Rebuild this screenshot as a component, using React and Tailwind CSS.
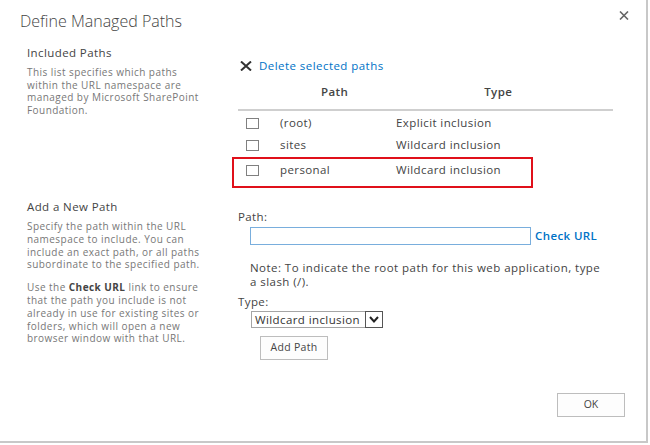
const rows = [
  { path: "(root)", type: "Explicit inclusion" },
  { path: "sites", type: "Wildcard inclusion" },
];

function CheckBox() {
  return <span className="block w-[13px] h-[11px] border border-[#808080] bg-white" />;
}

function PathRow({ path, type }) {
  return (
    <div className="flex items-center h-[22px] text-[11.5px] tracking-[0.4px] text-[#444]">
      <div className="w-[42px] pl-[8px]">
        <CheckBox />
      </div>
      <div className="w-[116px]">{path}</div>
      <div>{type}</div>
    </div>
  );
}

export default function App() {
  return (
    <div className="w-[650px] h-[445px] bg-white font-['Open_Sans',sans-serif]">
      <div className="w-[648px] h-[443px] border-r-2 border-b-2 border-[#c8c8c8] flex flex-col">
        {/* title bar */}
        <div className="flex justify-between items-start pl-[20px] pr-[17px] pt-[9px]">
          <h1 className="text-[16px] leading-[24px] font-light text-[#444]">Define Managed Paths</h1>
          <button className="mt-[2px] w-[10px] h-[9px] text-[#666]">
            <svg viewBox="0 0 10 9" className="w-[10px] h-[9px]">
              <path d="M1 0.5 L9 8.5 M9 0.5 L1 8.5" stroke="currentColor" strokeWidth="1.6" />
            </svg>
          </button>
        </div>

        {/* included paths */}
        <div className="flex mt-[12px]">
          <div className="w-[238px] pl-[27px]">
            <div className="text-[11.5px] tracking-[0.4px] leading-[16px] text-[#444]">Included Paths</div>
            <p className="mt-[5px] text-[10px] tracking-[0.45px] leading-[12.7px] text-[#777]">
              This list specifies which paths
              <br />
              within the URL namespace are
              <br />
              managed by Microsoft SharePoint
              <br />
              Foundation.
            </p>
          </div>
          <div className="flex-1">
            <div className="mt-[13px] flex items-center h-[16px]">
              <svg viewBox="0 0 12 10" className="ml-[2px] w-[12px] h-[10px] text-[#333]">
                <path d="M1 0.5 L11 9.5 M11 0.5 L1 9.5" stroke="currentColor" strokeWidth="2" />
              </svg>
              <a className="ml-[7px] text-[11.5px] tracking-[0.45px] text-[#0072c6]">Delete selected paths</a>
            </div>
            <div className="mt-[10px] w-[375px] h-[27px] border-b-2 border-[#cfcfcf] flex items-start text-[11.5px] tracking-[0.4px] leading-[16px] font-semibold text-[#444]">
              <span className="ml-[83px]">Path</span>
              <span className="ml-[136px]">Type</span>
            </div>
            <div className="mt-[1px]">
              {rows.map((r) => (
                <PathRow key={r.path} {...r} />
              ))}
            </div>
            <div className="-ml-[6px] mt-[1px] w-[301px] h-[31px] border-2 border-[#e0101a] pl-[4px]">
              <PathRow path="personal" type="Wildcard inclusion" />
            </div>
          </div>
        </div>

        {/* add a new path */}
        <div className="flex mt-[7px]">
          <div className="w-[238px] pl-[27px]">
            <div className="mt-[4px] text-[11.5px] tracking-[0.4px] leading-[16px] text-[#444]">Add a New Path</div>
            <p className="mt-[5px] text-[10px] tracking-[0.45px] leading-[12.8px] text-[#777]">
              Specify the path within the URL
              <br />
              namespace to include. You can
              <br />
              include an exact path, or all paths
              <br />
              subordinate to the specified path.
            </p>
            <p className="mt-[10px] text-[10px] tracking-[0.45px] leading-[12.8px] text-[#777]">
              Use the <b className="text-[#444]">Check URL</b> link to ensure
              <br />
              that the path you include is not
              <br />
              already in use for existing sites or
              <br />
              folders, which will open a new
              <br />
              browser window with that URL.
            </p>
          </div>
          <div className="flex-1">
            <div className="mt-[14px] text-[11.5px] tracking-[0.4px] leading-[16px] text-[#444]">Path:</div>
            <div className="mt-[2px] flex items-center">
              <input className="ml-[12px] w-[281px] h-[18px] border border-[#79aedd] outline-none" />
              <a className="ml-[4px] text-[11.5px] tracking-[0.4px] font-semibold text-[#0072c6]">Check URL</a>
            </div>
            <p className="mt-[16px] ml-[12px] text-[11.5px] tracking-[0.45px] leading-[14px] text-[#444]">
              Note: To indicate the root path for this web application, type
              <br />a slash (/).
            </p>
            <div className="mt-[5px] text-[11.5px] tracking-[0.4px] leading-[16px] text-[#444]">Type:</div>
            <div className="mt-[1px] ml-[13px] w-[132px] h-[17px] border border-[#a5a5a5] flex items-center">
              <span className="flex-1 pl-[3px] text-[11.5px] tracking-[0.4px] leading-[15px] text-[#333] whitespace-nowrap">Wildcard inclusion</span>
              <span className="w-[18px] h-[17px] -mr-px border border-[#555] bg-white flex items-center justify-center">
                <svg viewBox="0 0 10 7" className="w-[10px] h-[7px]">
                  <path d="M1 1 L5 5.5 L9 1" fill="none" stroke="#222" strokeWidth="2" />
                </svg>
              </span>
            </div>
            <button className="mt-[8px] ml-[22px] w-[68px] h-[24px] border border-[#bdbdbd] bg-[#fdfdfd] text-[10.5px] tracking-[0.3px] text-[#444]">
              Add Path
            </button>
          </div>
        </div>

        {/* footer */}
        <div className="flex justify-end pr-[21px] mt-[33px]">
          <button className="w-[68px] h-[24px] border border-[#bdbdbd] bg-[#fdfdfd] text-[10.5px] text-[#444]">
            OK
          </button>
        </div>
      </div>
    </div>
  );
}
